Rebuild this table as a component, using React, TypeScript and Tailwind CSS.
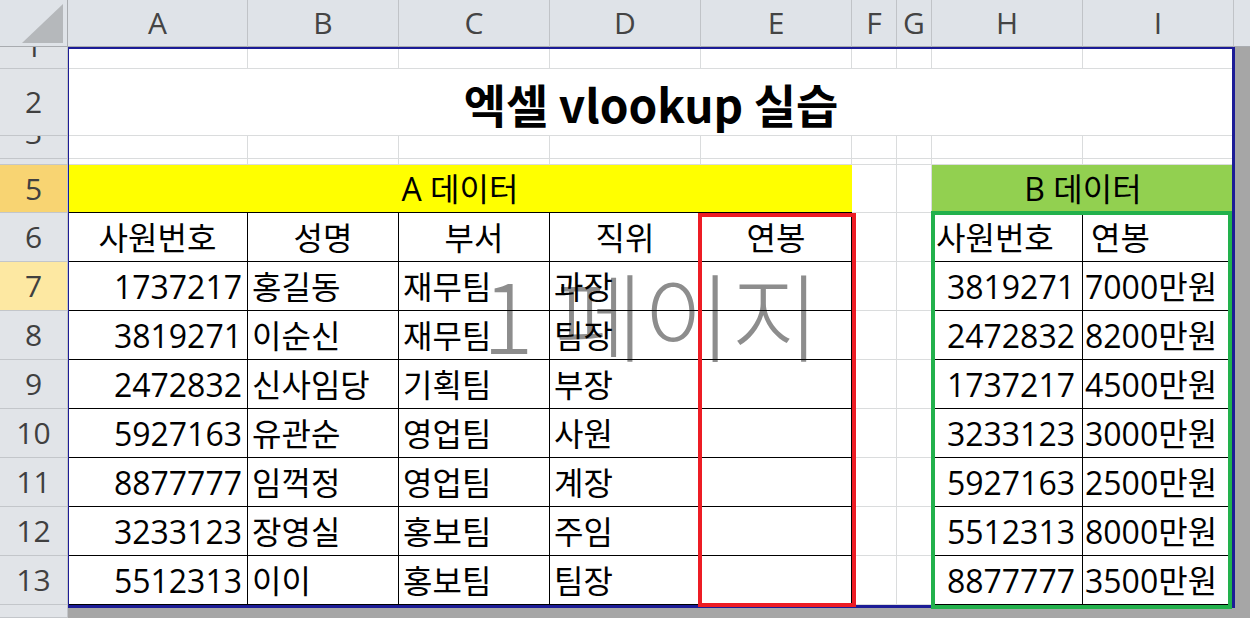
import React from 'react';

// column letters shown in the header strip
const COLS = ['A', 'B', 'C', 'D', 'E', 'F', 'G', 'H', 'I'];

// A 데이터 rows + B 데이터 rows, side by side as they appear on the sheet
const DATA: { no: number; a: [string, string, string, string]; b: [string, string] }[] = [
  { no: 7, a: ['1737217', '홍길동', '재무팀', '과장'], b: ['3819271', '7000만원'] },
  { no: 8, a: ['3819271', '이순신', '재무팀', '팀장'], b: ['2472832', '8200만원'] },
  { no: 9, a: ['2472832', '신사임당', '기획팀', '부장'], b: ['1737217', '4500만원'] },
  { no: 10, a: ['5927163', '유관순', '영업팀', '사원'], b: ['3233123', '3000만원'] },
  { no: 11, a: ['8877777', '임꺽정', '영업팀', '계장'], b: ['5927163', '2500만원'] },
  { no: 12, a: ['3233123', '장영실', '홍보팀', '주임'], b: ['5512313', '8000만원'] },
  { no: 13, a: ['5512313', '이이', '홍보팀', '팀장'], b: ['8877777', '3500만원'] },
];

const GRID =
  'grid grid-cols-[68px_180px_151px_151px_151px_151px_45px_35px_151px_151px_16px] grid-rows-[47px_22px_67px_23px_6px_48px_49px_49px_49px_49px_49px_49px_49px_49px_13px]';

const blank = 'border-r border-b border-[#dadcdd]';
const boxed = 'border-r border-b border-black flex items-end pb-[7px] overflow-hidden whitespace-nowrap';
const txt = 'text-[32px] leading-none';

const RowHead: React.FC<{ label?: string; tone?: 'sel' | 'hi'; shift?: string }> = ({ label, tone, shift }) => {
  const bg = tone === 'sel' ? 'bg-[#f8d472]' : tone === 'hi' ? 'bg-[#fde8a2]' : 'bg-[#e1e4e8]';
  return (
    <div
      className={`${bg} border-r border-b border-[#c3c6ca] flex justify-center overflow-hidden ${
        shift ? 'items-start' : 'items-center'
      }`}
    >
      {label && (
        <span className={`text-[30px] leading-none text-[#404040] ${shift ?? ''}`}>{label}</span>
      )}
    </div>
  );
};

const Outside = () => <div className="bg-[#a6a6a6]" />;

export default function App() {
  return (
    <div className="relative w-[1250px] h-[618px] overflow-hidden bg-white font-['Open_Sans','Noto_Sans_CJK_KR',sans-serif] text-black">
      {/* page watermark sits under the cells */}
      <div className={`${GRID} absolute inset-0 z-0 pointer-events-none`}>
        <div className="col-start-2 col-span-9 row-start-8 row-span-2 flex items-center justify-center pt-[4px]">
          <span className="text-[96px] leading-none font-light text-[#8d8d8d] font-['Noto_Sans_CJK_KR',sans-serif]">
            1 페이지
          </span>
        </div>
      </div>

      <div className={`${GRID} relative z-10`}>
        {/* header strip */}
        <div className="bg-[#dfe3e8] border-r border-b border-[#a9acb0]">
          <svg width="67" height="46" viewBox="0 0 67 46">
            <polygon points="63,4 63,43 22,43" fill="#b5b8bb" />
          </svg>
        </div>
        {COLS.map((c) => (
          <div
            key={c}
            className="bg-[#dfe3e8] border-r border-[#c0c3c7] border-b border-b-[#a9acb0] flex items-center justify-center"
          >
            <span className="text-[30px] leading-none text-[#444]">{c}</span>
          </div>
        ))}
        <div className="bg-[#dfe3e8] border-b border-[#a9acb0]" />

        {/* row 1 */}
        <RowHead label="1" shift="-mt-[16px]" />
        {COLS.map((c) => (
          <div key={c} className={blank} />
        ))}
        <Outside />

        {/* row 2 : title */}
        <RowHead label="2" />
        <div className="col-span-9 border-b border-[#dadcdd] flex items-center justify-center pt-[2px]">
          <span className="text-[46px] leading-none font-bold font-['Noto_Sans_CJK_KR',sans-serif]">
            엑셀 vlookup 실습
          </span>
        </div>
        <Outside />

        {/* row 3 */}
        <RowHead label="3" shift="-mt-[18px]" />
        {COLS.map((c) => (
          <div key={c} className={blank} />
        ))}
        <Outside />

        {/* row 4 (squashed) */}
        <RowHead />
        {COLS.map((c) => (
          <div key={c} className={blank} />
        ))}
        <Outside />

        {/* row 5 : section titles */}
        <RowHead label="5" tone="sel" />
        <div className="col-span-5 bg-[#ffff00] border-b border-black flex items-end justify-center pb-[7px]">
          <span className={txt}>A 데이터</span>
        </div>
        <div className={blank} />
        <div className={blank} />
        <div className="col-span-2 bg-[#92d050] border-b border-black flex items-end justify-center pb-[7px]">
          <span className={txt}>B 데이터</span>
        </div>
        <Outside />

        {/* row 6 : column titles */}
        <RowHead label="6" />
        {['사원번호', '성명', '부서', '직위', '연봉'].map((t) => (
          <div key={t} className={`${boxed} justify-center`}>
            <span className={txt}>{t}</span>
          </div>
        ))}
        <div className={blank} />
        <div className={blank} />
        <div className={`${boxed} pl-[4px]`}>
          <span className={txt}>사원번호</span>
        </div>
        <div className={`${boxed} pl-[8px]`}>
          <span className={txt}>연봉</span>
        </div>
        <Outside />

        {/* rows 7 - 13 */}
        {DATA.map((r) => (
          <React.Fragment key={r.no}>
            <RowHead label={String(r.no)} tone={r.no === 7 ? 'hi' : undefined} />
            <div className={`${boxed} justify-end pr-[5px]`}>
              <span className={txt}>{r.a[0]}</span>
            </div>
            {r.a.slice(1).map((t, i) => (
              <div key={i} className={`${boxed} pl-[4px]`}>
                <span className={txt}>{t}</span>
              </div>
            ))}
            <div className={boxed} />
            <div className={blank} />
            <div className={blank} />
            <div className={`${boxed} justify-end pr-[7px]`}>
              <span className={txt}>{r.b[0]}</span>
            </div>
            <div className={`${boxed} pl-[2px]`}>
              <span className={txt}>{r.b[1]}</span>
            </div>
            <Outside />
          </React.Fragment>
        ))}

        {/* strip below the print area */}
        <RowHead />
        <div className="col-span-10 bg-[#a6a6a6]" />
      </div>

      {/* page break border and the two highlight boxes */}
      <div className={`${GRID} absolute inset-0 z-20 pointer-events-none`}>
        <div className="col-start-2 col-span-9 row-start-2 row-span-13 border-l border-t-2 border-r-[3px] border-b-[3px] border-[#1c1c96] -mr-[1px] -mb-[3px]" />
        <div className="col-start-6 row-start-7 row-span-8 border-4 border-[#ed1c24] -ml-[3px] -mr-[4px] -mb-[2px]" />
        <div className="col-start-9 col-span-2 row-start-7 row-span-8 border-4 border-[#22b14c] -ml-[1px] mr-[2px] -mt-[2px] -mb-[4px]" />
      </div>
    </div>
  );
}
